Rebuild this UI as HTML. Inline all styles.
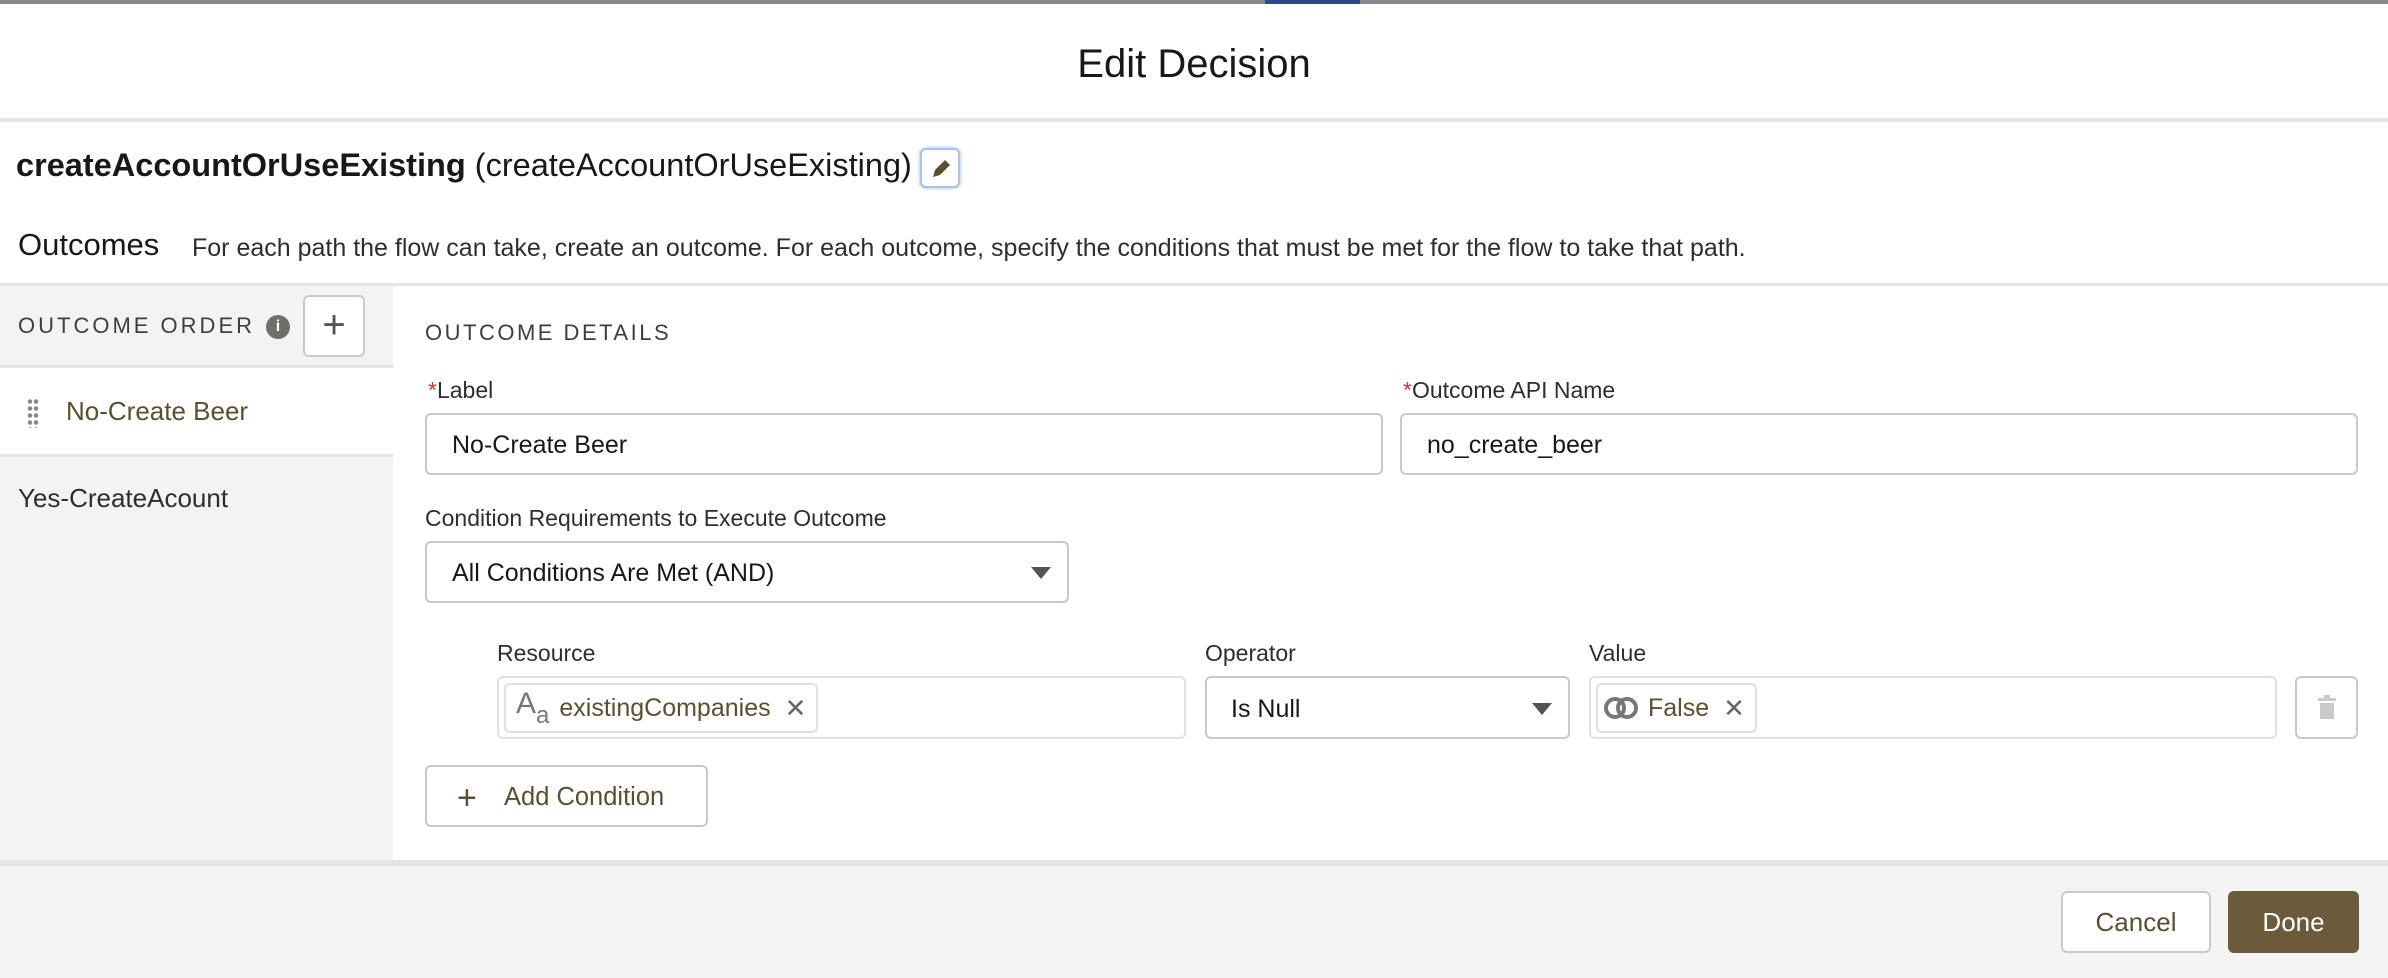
<!DOCTYPE html>
<html><head><meta charset="utf-8"><style>
*{box-sizing:border-box;margin:0;padding:0}
body{width:2388px;height:978px;overflow:hidden;background:#fff;font-family:"Liberation Sans",sans-serif;color:#181818;position:relative}
.a{position:absolute}
.inp{position:absolute;border:2px solid #c9c9c9;border-radius:6px;background:#fff}
.lbl{position:absolute;font-size:23px;color:#2e2e2e}
.pill{position:absolute;border:2px solid #e0e0e0;border-radius:6px;height:50px;top:5px;left:5px;display:flex;align-items:center;font-size:25px;color:#5c4f2e;padding:0 10px}
.x{color:#666;font-size:26px;margin-left:14px}
</style></head><body>
<div class="a" style="left:0;top:0;width:2388px;height:4px;background:#888"></div>
<div class="a" style="left:1265px;top:0;width:95px;height:4px;background:#2a4a8a"></div>
<div class="a" style="left:0;top:0;width:2388px;top:42px;text-align:center;font-size:40px;color:#181818">Edit Decision</div>
<div class="a" style="left:0;top:118px;width:2388px;height:4px;background:#e5e5e5"></div>
<div class="a" style="left:16px;top:147px;font-size:32.5px"><b>createAccountOrUseExisting</b> (createAccountOrUseExisting)</div>
<div class="a" style="left:920px;top:148px;width:40px;height:40px;border:2px solid #a6c4f0;border-radius:6px;box-shadow:0 0 3px #8ab0e8;background:#fff">
<svg width="36" height="36" viewBox="0 0 36 36"><path d="M11 27l2-7 10-10 5 5-10 10z" fill="#5c4f2e"/></svg></div>
<div class="a" style="left:18px;top:227px;font-size:31px">Outcomes</div>
<div class="a" style="left:192px;top:234px;font-size:25px;color:#2e2e2e">For each path the flow can take, create an outcome. For each outcome, specify the conditions that must be met for the flow to take that path.</div>
<div class="a" style="left:0;top:283px;width:2388px;height:3px;background:#e5e5e5"></div>
<div class="a" style="left:0;top:286px;width:393px;height:574px;background:#f3f3f3"></div>
<div class="a" style="left:18px;top:313px;font-size:22px;letter-spacing:3px;color:#3e3e3e">OUTCOME ORDER</div>
<div class="a" style="left:266px;top:315px;width:24px;height:24px;border-radius:50%;background:#706e6b;color:#fff;font-size:16px;font-weight:bold;text-align:center;line-height:24px">i</div>
<div class="a" style="left:303px;top:295px;width:62px;height:62px;border:2px solid #c9c9c9;border-radius:6px;background:#fff;text-align:center;line-height:56px;font-size:40px;color:#555;font-weight:300">+</div>
<div class="a" style="left:0;top:365px;width:393px;height:92px;background:#fff;border-top:3px solid #e5e5e5;border-bottom:3px solid #e5e5e5"></div>
<div class="a" style="left:27px;top:398px;width:12px;height:30px;background:radial-gradient(circle,#888 2px,transparent 2.5px) 0 0/6px 7px"></div>
<div class="a" style="left:66px;top:396px;font-size:26px;color:#5c4f2e">No-Create Beer</div>
<div class="a" style="left:18px;top:483px;font-size:26px;color:#2e2e2e">Yes-CreateAcount</div>
<div class="a" style="left:425px;top:320px;font-size:22px;letter-spacing:2.5px;color:#3e3e3e">OUTCOME DETAILS</div>
<div class="lbl" style="left:428px;top:377px"><span style="color:#c23934">*</span>Label</div>
<div class="lbl" style="left:1403px;top:377px"><span style="color:#c23934">*</span>Outcome API Name</div>
<div class="inp" style="left:425px;top:413px;width:958px;height:62px"><span class="a" style="left:25px;top:16px;font-size:25px">No-Create Beer</span></div>
<div class="inp" style="left:1400px;top:413px;width:958px;height:62px"><span class="a" style="left:25px;top:16px;font-size:25px">no_create_beer</span></div>
<div class="lbl" style="left:425px;top:505px">Condition Requirements to Execute Outcome</div>
<div class="inp" style="left:425px;top:541px;width:644px;height:62px"><span class="a" style="left:25px;top:16px;font-size:25px">All Conditions Are Met (AND)</span><span class="a" style="right:16px;top:24px;border-left:10px solid transparent;border-right:10px solid transparent;border-top:12px solid #555"></span></div>
<div class="lbl" style="left:497px;top:640px">Resource</div>
<div class="lbl" style="left:1205px;top:640px">Operator</div>
<div class="lbl" style="left:1589px;top:640px">Value</div>
<div class="inp" style="left:497px;top:676px;width:689px;height:63px;border-color:#e0e0e0"><div class="pill"><span style="color:#777;font-size:30px;position:relative;top:-4px">A</span><span style="color:#777;font-size:24px;position:relative;top:8px;margin-right:10px">a</span>existingCompanies<span class="x">✕</span></div></div>
<div class="inp" style="left:1205px;top:676px;width:365px;height:63px"><span class="a" style="left:24px;top:17px;font-size:25px">Is Null</span><span class="a" style="right:16px;top:25px;border-left:10px solid transparent;border-right:10px solid transparent;border-top:12px solid #555"></span></div>
<div class="inp" style="left:1589px;top:676px;width:688px;height:63px;border-color:#e0e0e0"><div class="pill" style="padding-left:4px"><svg width="40" height="30" viewBox="0 0 40 30" style="margin-right:6px"><circle cx="13" cy="15" r="9" fill="none" stroke="#777" stroke-width="4"/><circle cx="25" cy="15" r="9" fill="none" stroke="#777" stroke-width="4"/></svg>False<span class="x">✕</span></div></div>
<div class="inp" style="left:2295px;top:676px;width:63px;height:63px"><svg class="a" style="left:18px;top:16px" width="24" height="28" viewBox="0 0 24 28"><rect x="9" y="1" width="6" height="3" fill="#c9c9c9"/><rect x="3" y="4" width="18" height="3" fill="#c9c9c9"/><rect x="5" y="9" width="14" height="16" fill="#c9c9c9"/></svg></div>
<div class="inp" style="left:425px;top:765px;width:283px;height:62px"><span class="a" style="left:30px;top:12px;font-size:34px;color:#5c4f2e;font-weight:300">+</span><span class="a" style="left:77px;top:16px;font-size:25.5px;color:#5c4f2e">Add Condition</span></div>
<div class="a" style="left:0;top:860px;width:2388px;height:118px;background:#f3f3f3;border-top:6px solid #e5e5e5"></div>
<div class="inp" style="left:2061px;top:891px;width:150px;height:62px;text-align:center;line-height:58px;font-size:26px;color:#5c4f2e">Cancel</div>
<div class="a" style="left:2228px;top:891px;width:131px;height:62px;border-radius:6px;background:#6b5b3a;color:#fff;text-align:center;line-height:62px;font-size:26px">Done</div>
</body></html>
